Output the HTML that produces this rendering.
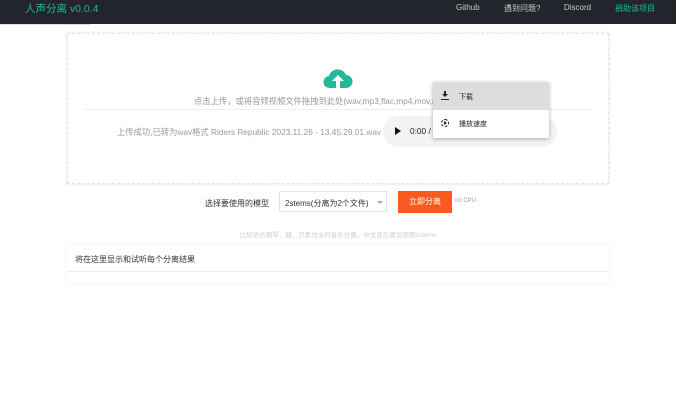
<!DOCTYPE html><html><head><style>
body{margin:0;width:676px;height:406px;background:#fff;font-family:"Liberation Sans","Noto Sans CJK SC",sans-serif;position:relative;overflow:hidden}
.a{position:absolute;white-space:nowrap}
</style></head><body>
<div class="a" style="left:0;top:0;width:676px;height:24px;background:#22252b"></div>
<div class="a" style="left:25px;top:1px;font-size:10.5px;color:#1fb89a">人声分离 v0.0.4</div>
<div class="a" style="left:456px;top:3px;font-size:8px;color:#ccc">Github</div>
<div class="a" style="left:504px;top:3px;font-size:8px;color:#ccc">遇到问题?</div>
<div class="a" style="left:564px;top:3px;font-size:8px;color:#ccc">Discord</div>
<div class="a" style="left:615px;top:3px;font-size:8px;color:#1fb89a">捐助该项目</div>
<div class="a" style="left:0;top:24px;width:90px;height:1px;background:#ddd"></div>

<div class="a" style="left:67px;top:33px;width:540px;height:149px;border:1px dashed #e4e4e4;box-shadow:0 0 3px rgba(0,0,0,.12)"></div>
<svg class="a" style="left:323px;top:67px" width="30" height="22" viewBox="0 0 30 22"><path d="M7 21a6 6 0 0 1-1-12 9 9 0 0 1 17-1 6.5 6.5 0 0 1 0 13z" fill="#1fb89a"/><path d="M15 8l-6 6h4v7h4v-7h4z" fill="#fff"/></svg>
<div class="a" style="left:194px;top:95px;font-size:8.3px;color:#999">点击上传，或将音频视频文件拖拽到此处(wav,mp3,flac,mp4,mov,mkv)</div>
<div class="a" style="left:84px;top:109px;width:507px;height:1px;background:#eee"></div>
<div class="a" style="left:117px;top:126px;font-size:8.3px;color:#999">上传成功,已转为wav格式 Riders Republic 2023.11.26 - 13.45.29.01.wav</div>
<div class="a" style="left:383px;top:116px;width:174px;height:31px;border-radius:16px;background:#f1f3f4"></div>
<div class="a" style="left:395px;top:127px;width:0;height:0;border-left:6px solid #111;border-top:4px solid transparent;border-bottom:4px solid transparent"></div>
<div class="a" style="left:410px;top:126px;font-size:8.3px;color:#222">0:00 /</div>
<div class="a" style="left:433px;top:82px;width:116px;height:56px;background:#fff;box-shadow:0 1px 4px rgba(0,0,0,.3)"></div>
<div class="a" style="left:433px;top:82px;width:116px;height:28px;background:#ddd"></div>
<svg class="a" style="left:441px;top:91px" width="8" height="9" viewBox="0 0 8 9"><path d="M3 0h2v3h2L4 6 1 3h2zM0 8h8v1H0z" fill="#222"/></svg>
<div class="a" style="left:459px;top:92px;font-size:7px;color:#222">下载</div>
<div class="a" style="left:441px;top:119px;width:6px;height:6px;border:1.3px dashed #222;border-radius:50%"></div>
<div class="a" style="left:444px;top:121px;width:0;height:0;border-left:3px solid #222;border-top:2px solid transparent;border-bottom:2px solid transparent"></div>
<div class="a" style="left:459px;top:119px;font-size:7px;color:#222">播放速度</div>

<div class="a" style="left:205px;top:198px;font-size:8px;color:#333">选择要使用的模型</div>
<div class="a" style="left:279px;top:191px;width:108px;height:21px;border:1px solid #e4e4e4;box-sizing:border-box"></div>
<div class="a" style="left:285px;top:198px;font-size:8px;color:#333">2stems(分离为2个文件)</div>
<div class="a" style="left:377px;top:201px;border-top:3px solid #aaa;border-left:3px solid transparent;border-right:3px solid transparent"></div>
<div class="a" style="left:398px;top:191px;width:54px;height:22px;background:#fa5a1e;color:#fff;font-size:8px;text-align:center;line-height:22px">立即分离</div>
<div class="a" style="left:455px;top:198px;font-size:6px;color:#999">on CPU</div>
<div class="a" style="left:0;top:229px;width:676px;text-align:center;font-size:6.5px;color:#ccc">比较适合钢琴、鼓、贝斯为主的音乐分离，中文音乐建议使用2stems</div>

<div class="a" style="left:67px;top:245px;width:542px;height:38px;box-shadow:0 0 3px rgba(0,0,0,.08)"></div>
<div class="a" style="left:67px;top:271px;width:542px;height:1px;background:#eee"></div>
<div class="a" style="left:75px;top:254px;font-size:8px;color:#333">将在这里显示和试听每个分离结果</div>
</body></html>
